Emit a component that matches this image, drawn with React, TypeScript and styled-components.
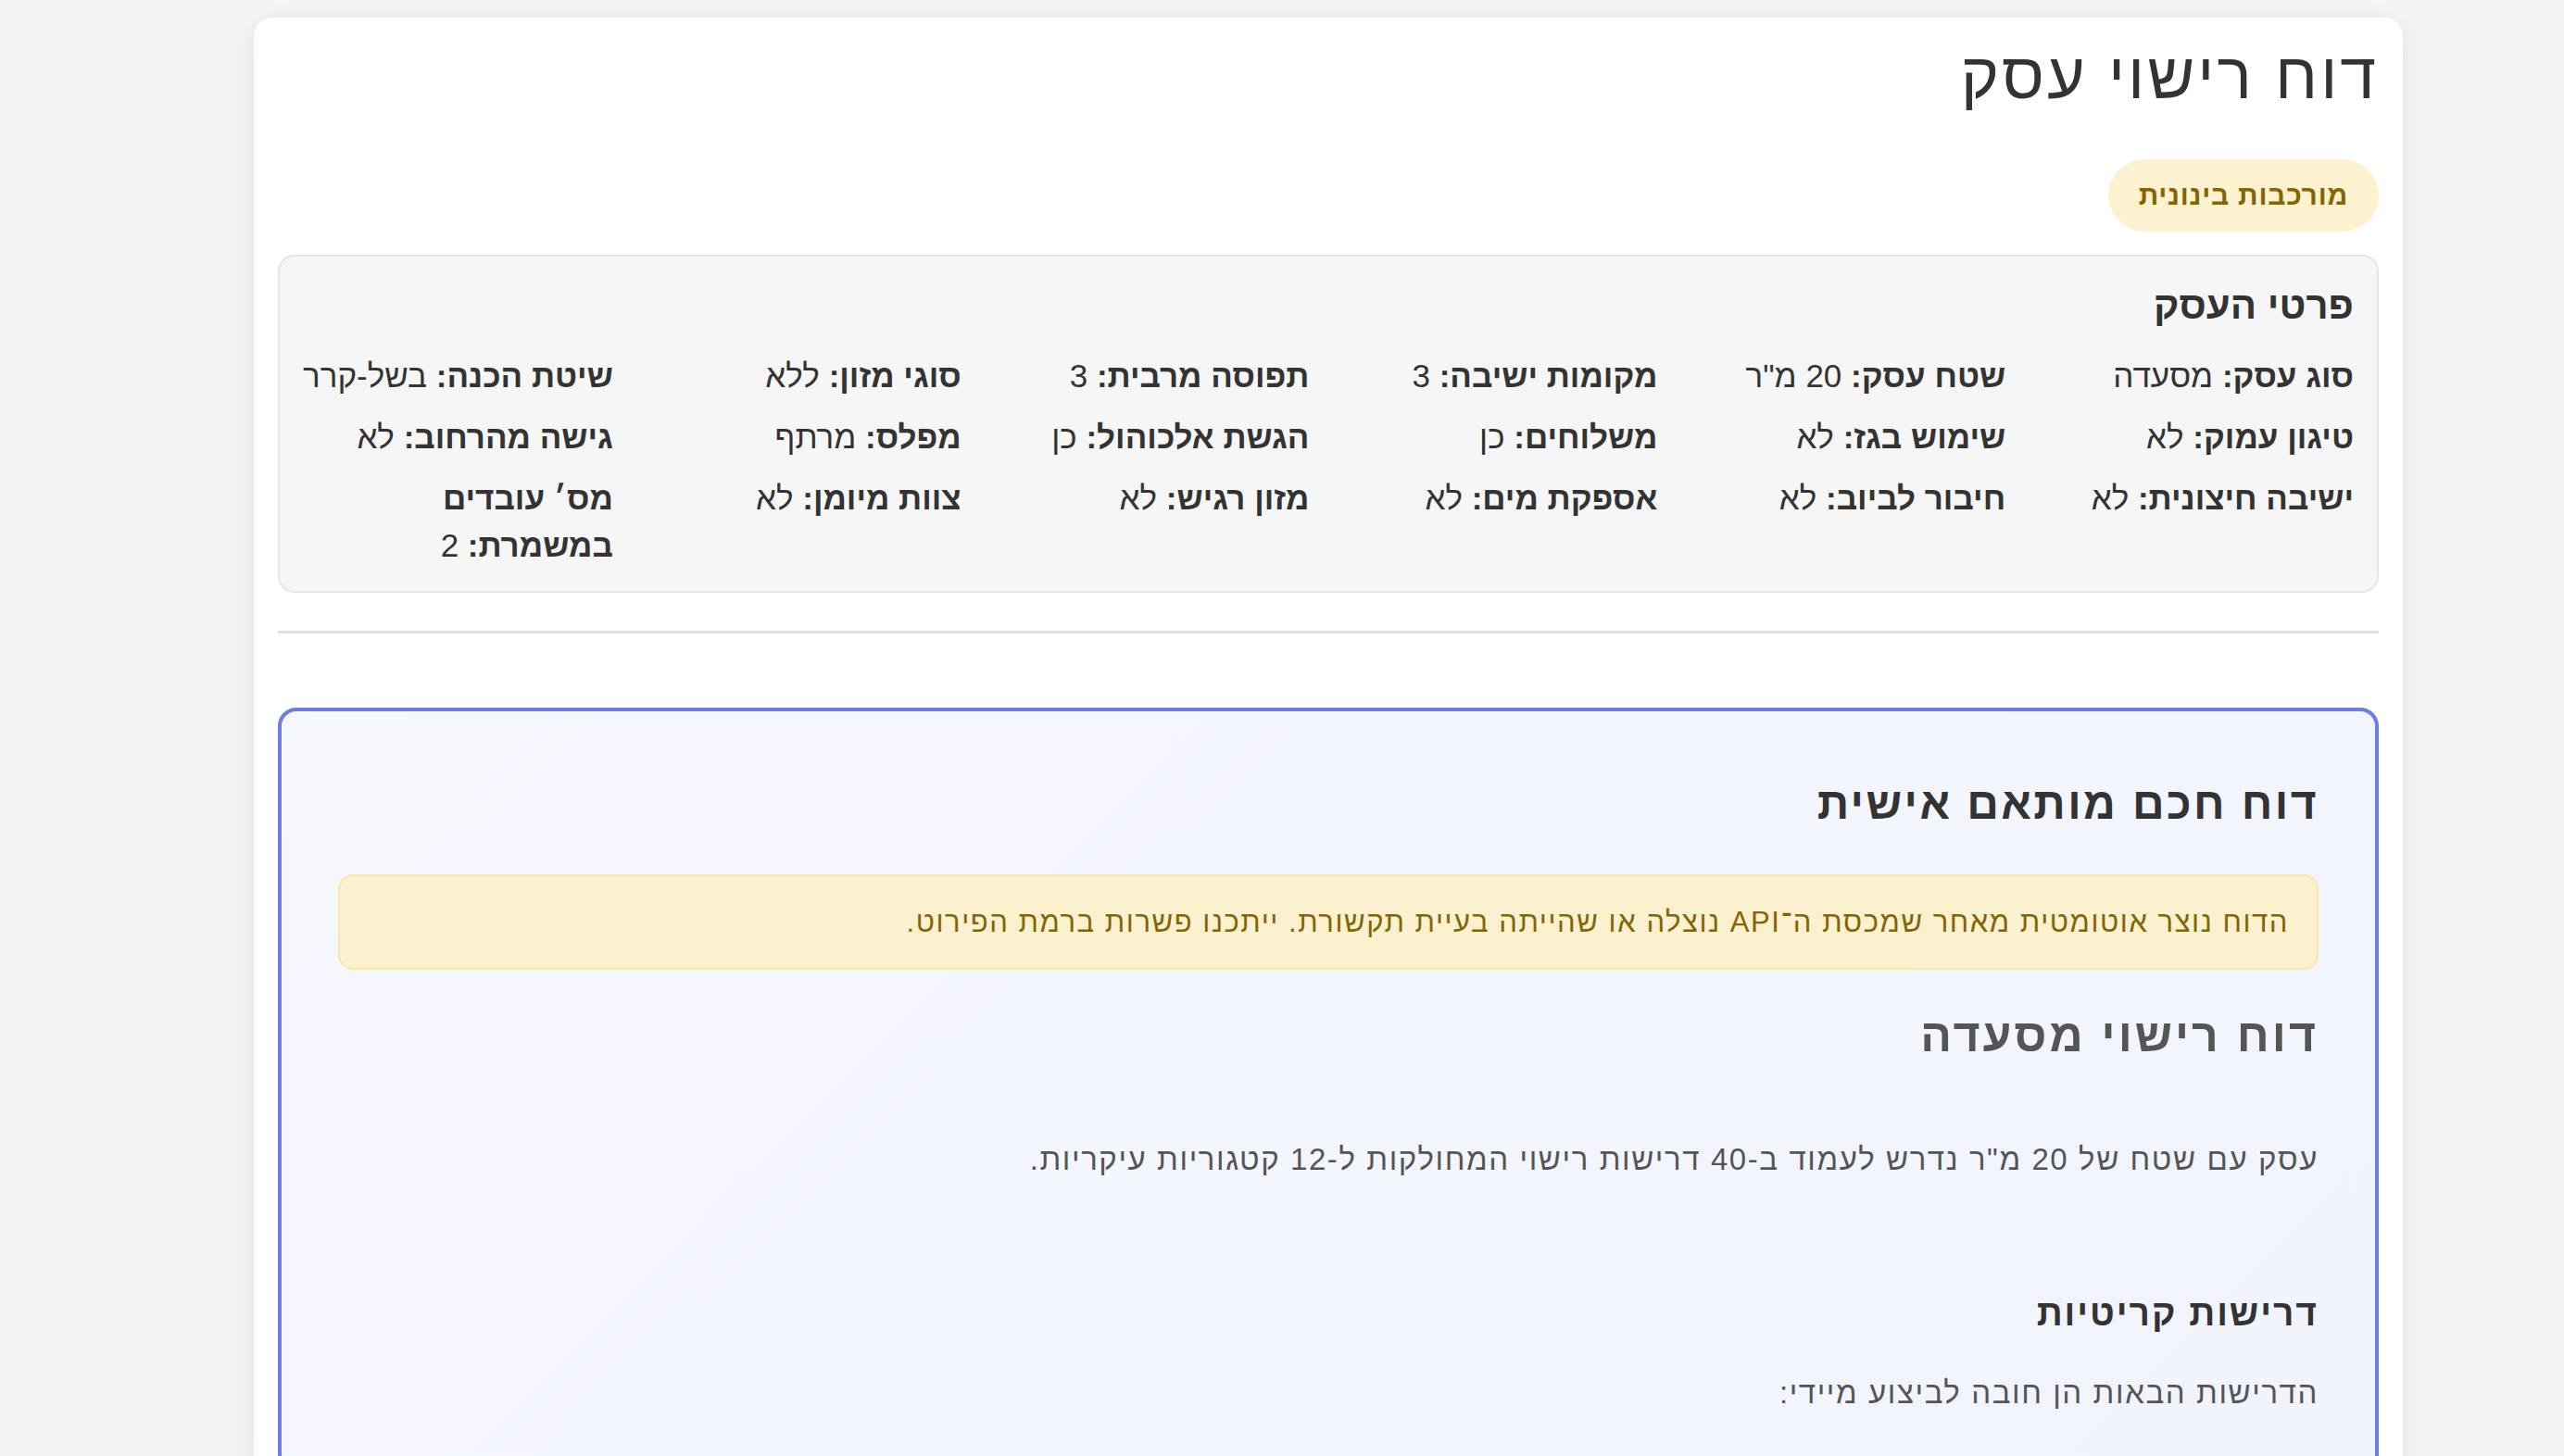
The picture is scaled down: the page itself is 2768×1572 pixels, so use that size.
import React from "react";
import styled, { createGlobalStyle } from "styled-components";

interface Detail {
    label: string;
    value: string;
}

const details: Detail[] = [
    { label: "סוג עסק", value: "מסעדה" },
    { label: "שטח עסק", value: '20 מ"ר' },
    { label: "מקומות ישיבה", value: "3" },
    { label: "תפוסה מרבית", value: "3" },
    { label: "סוגי מזון", value: "ללא" },
    { label: "שיטת הכנה", value: "בשל-קרר" },
    { label: "טיגון עמוק", value: "לא" },
    { label: "שימוש בגז", value: "לא" },
    { label: "משלוחים", value: "כן" },
    { label: "הגשת אלכוהול", value: "כן" },
    { label: "מפלס", value: "מרתף" },
    { label: "גישה מהרחוב", value: "לא" },
    { label: "ישיבה חיצונית", value: "לא" },
    { label: "חיבור לביוב", value: "לא" },
    { label: "אספקת מים", value: "לא" },
    { label: "מזון רגיש", value: "לא" },
    { label: "צוות מיומן", value: "לא" },
    { label: "מס׳ עובדים במשמרת", value: "2" },
];

const App: React.FC = () => {
    return (
        <>
            <GlobalStyle />
            <Page>
                <Card>
                    <Title>דוח רישוי עסק</Title>
                    <BadgeRow>
                        <Badge>מורכבות בינונית</Badge>
                    </BadgeRow>

                    <DetailsBox>
                        <DetailsHeading>פרטי העסק</DetailsHeading>
                        <DetailsGrid>
                            {details.map((d) => (
                                <DetailItem key={d.label}>
                                    <strong>{d.label}:</strong> {d.value}
                                </DetailItem>
                            ))}
                        </DetailsGrid>
                    </DetailsBox>

                    <Divider />

                    <SmartReport>
                        <ReportTitle>דוח חכם מותאם אישית</ReportTitle>
                        <Notice>
                            הדוח נוצר אוטומטית מאחר שמכסת ה־API נוצלה או שהייתה בעיית תקשורת. ייתכנו
                            פשרות ברמת הפירוט.
                        </Notice>
                        <MdHeading>דוח רישוי מסעדה</MdHeading>
                        <MdText>
                            עסק עם שטח של 20 מ"ר נדרש לעמוד ב-40 דרישות רישוי המחולקות ל-12 קטגוריות
                            עיקריות.
                        </MdText>
                        <MdSubHeading>דרישות קריטיות</MdSubHeading>
                        <MdText $tight>הדרישות הבאות הן חובה לביצוע מיידי:</MdText>
                    </SmartReport>
                </Card>
            </Page>
        </>
    );
};

export default App;

// Global
const GlobalStyle = createGlobalStyle`
    html, body {
        margin: 0;
        padding: 0;
        background: #f4f4f4;
        font-family: "Liberation Sans", Arial, sans-serif;
        color: #333;
    }
`;

// Layout
const Page = styled.div`
    direction: rtl;
    display: flex;
    padding: 19px 174px 0 274px;
`;

const Card = styled.main`
    width: 2320px;
    box-sizing: border-box;
    background: #fff;
    border-radius: 20px;
    padding: 26px 26px 0;
    box-shadow: 0 4px 24px rgba(0, 0, 0, 0.08);
`;

const Title = styled.h1`
    margin: 0;
    font-size: 70px;
    font-weight: 400;
    letter-spacing: 0.042em;
    line-height: 74px;
    color: #333;
`;

const BadgeRow = styled.div`
    display: flex;
    margin-top: 53px;
`;

const Badge = styled.span`
    display: inline-block;
    padding: 23px 33px;
    border-radius: 40px;
    background: #fdf2cf;
    color: #856404;
    font-size: 30px;
    font-weight: 700;
    letter-spacing: 0.025em;
    line-height: 32px;
`;

// Business details
const DetailsBox = styled.section`
    margin-top: 25px;
    background: #f6f6f6;
    border: 2px solid #e6e6e6;
    border-radius: 18px;
    padding: 31px 25px 24px;
`;

const DetailsHeading = styled.h3`
    margin: 0 0 28px;
    font-size: 42px;
    font-weight: 700;
    line-height: 44px;
    color: #333;
`;

const DetailsGrid = styled.div`
    display: grid;
    grid-template-columns: repeat(6, 1fr);
    column-gap: 41px;
    row-gap: 15px;
`;

const DetailItem = styled.div`
    font-size: 35px;
    line-height: 51px;
    color: #333;

    strong {
        font-weight: 700;
    }
`;

const Divider = styled.hr`
    margin: 41px 0 80px;
    border: none;
    height: 3px;
    background: #e0e0e0;
`;

// Smart report
const SmartReport = styled.section`
    border: 4px solid #6b7ee3;
    border-radius: 20px;
    background: linear-gradient(135deg, #f7f8fe 0%, #f1f4fd 100%);
    padding: 76px 61px 61px;
`;

const ReportTitle = styled.h2`
    margin: 0 0 52px;
    font-size: 48px;
    font-weight: 700;
    letter-spacing: 0.05em;
    line-height: 48px;
    color: #333;
`;

const Notice = styled.div`
    background: #fcf1cf;
    border: 2px solid #fbe6a6;
    border-radius: 16px;
    padding: 27px 30px;
    color: #856404;
    font-size: 31px;
    letter-spacing: 0.05em;
    line-height: 45px;
`;

const MdHeading = styled.h1`
    margin: 47px 0 0;
    font-size: 50px;
    font-weight: 700;
    letter-spacing: 0.06em;
    line-height: 48px;
    color: #555;
`;

const MdText = styled.p<{ $tight?: boolean }>`
    margin: ${(p) => (p.$tight ? "44px 0 0" : "87px 0 0")};
    font-size: 33px;
    letter-spacing: 0.048em;
    line-height: 45px;
    color: #555;
`;

const MdSubHeading = styled.h3`
    margin: 125px 0 0;
    font-size: 39px;
    font-weight: 700;
    letter-spacing: 0.05em;
    line-height: 38px;
    color: #333;
`;
